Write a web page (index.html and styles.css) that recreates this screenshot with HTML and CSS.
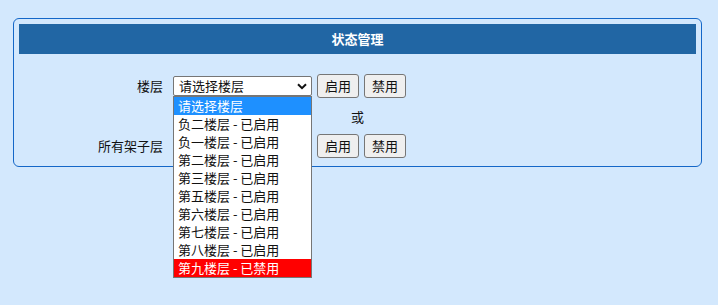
FILE: index.html
```html
<!DOCTYPE html>
<html lang="zh-CN">
<head>
<meta charset="utf-8">
<title>状态管理</title>
<link rel="stylesheet" href="styles.css">
</head>
<body>
<div class="panel">
  <div class="panel-head">状态管理</div>
  <div class="form">
    <div class="row">
      <div class="label">楼层</div>
      <div class="field">
        <div class="select">
          <span class="select-text">请选择楼层</span>
          <svg class="chev" width="10" height="7" viewBox="0 0 10 7"><path d="M1 1.2 L5 5.2 L9 1.2" fill="none" stroke="#111" stroke-width="2"/></svg>
        </div>
        <ul class="dropdown">
          <li class="opt active">请选择楼层</li>
          <li class="opt">负二楼层 - 已启用</li>
          <li class="opt">负一楼层 - 已启用</li>
          <li class="opt">第二楼层 - 已启用</li>
          <li class="opt">第三楼层 - 已启用</li>
          <li class="opt">第五楼层 - 已启用</li>
          <li class="opt">第六楼层 - 已启用</li>
          <li class="opt">第七楼层 - 已启用</li>
          <li class="opt">第八楼层 - 已启用</li>
          <li class="opt disabled">第九楼层 - 已禁用</li>
        </ul>
      </div>
      <div class="buttons">
        <button class="btn btn-on">启用</button>
        <button class="btn btn-off">禁用</button>
      </div>
    </div>
    <div class="or-row">或</div>
    <div class="row">
      <div class="label">所有架子层</div>
      <div class="field"></div>
      <div class="buttons">
        <button class="btn btn-on">启用</button>
        <button class="btn btn-off">禁用</button>
      </div>
    </div>
  </div>
</div>
</body>
</html>
```
FILE: styles.css
```css
html, body {
  margin: 0;
  padding: 0;
  background: #d3e8fd;
  font-family: "Noto Sans CJK SC", "Noto Sans", sans-serif;
  font-size: 13px;
  color: #111;
}
body {
  padding: 18px 0 0 13px;
  height: 305px;
  box-sizing: border-box;
}
.panel {
  width: 677px;
  border: 1px solid #1467c8;
  border-radius: 6px;
  padding: 5px;
}
.panel-head {
  height: 30px;
  line-height: 30px;
  background: #2166a4;
  color: #fff;
  font-weight: bold;
  text-align: center;
}
.form {
  padding: 20px 0 3px;
}
.row {
  display: flex;
  align-items: center;
  height: 24px;
}
.label {
  width: 144px;
  padding-right: 10px;
  text-align: right;
  line-height: 24px;
}
.field {
  position: relative;
  width: 139px;
  margin-right: 5px;
  height: 20px;
}
.select {
  box-sizing: border-box;
  width: 139px;
  height: 20px;
  background: #fff;
  border: 1px solid #767676;
  border-radius: 2px;
  display: flex;
  align-items: center;
  justify-content: space-between;
  padding: 0 4px 0 5px;
}
.select-text {
  line-height: 18px;
}
.chev {
  display: block;
}
.dropdown {
  position: absolute;
  left: 0;
  top: 20px;
  width: 139px;
  box-sizing: border-box;
  margin: 0;
  padding: 0;
  list-style: none;
  background: #fff;
  border: 1px solid #767676;
  z-index: 5;
}
.opt {
  height: 18px;
  line-height: 18px;
  padding-left: 4px;
  white-space: nowrap;
}
.opt.active {
  background: #1e90ff;
  color: #fff;
}
.opt.disabled {
  background: #ff0000;
  color: #fff;
}
.buttons {
  display: flex;
  gap: 5px;
}
.btn {
  font: inherit;
  color: #111;
  height: 24px;
  padding: 0 6px;
  background: #efefef;
  border: 1px solid #767676;
  border-radius: 3px;
  line-height: 20px;
}
.btn-on { width: 42px; }
.btn-off { width: 42px; }
.or-row {
  height: 36px;
  line-height: 38px;
  text-align: center;
}
```
